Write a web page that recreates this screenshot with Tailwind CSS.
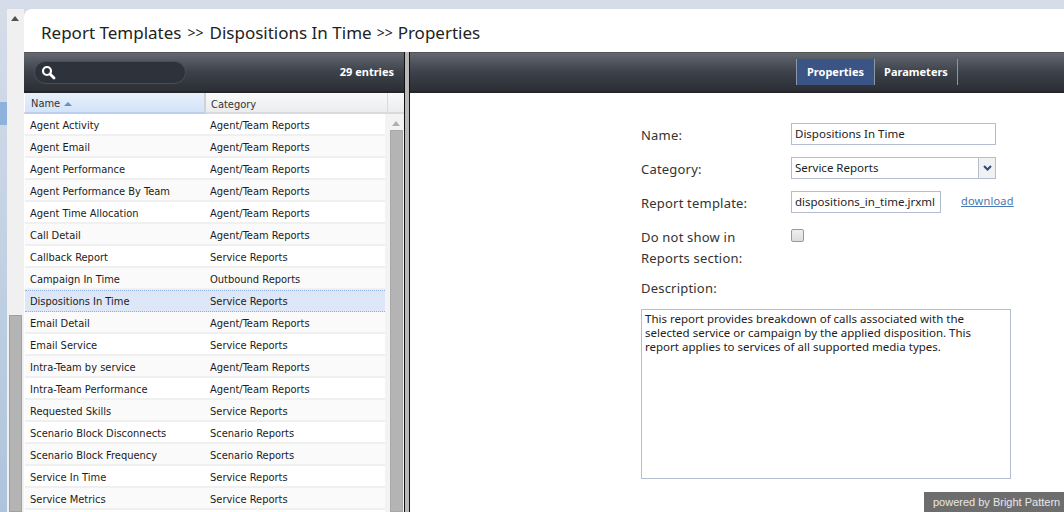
<!DOCTYPE html>
<html><head><meta charset="utf-8"><script src="https://cdn.jsdelivr.net/npm/@tailwindcss/browser@4"></script></head>
<body class="m-0">
<div class="w-[1064px] h-[512px] overflow-hidden flex flex-col bg-gradient-to-b from-[#d6dde9] to-[#aec4dc] font-['Tahoma','DejaVu_Sans_Condensed','Noto_Sans',sans-serif] text-[#222]">
  <div class="h-[9px] shrink-0"></div>
  <div class="flex flex-1 min-h-0">
    <div class="w-[7px] shrink-0 flex flex-col">
      <div class="h-[93px]"></div>
      <div class="h-[23px] bg-[#8fb2dc]"></div>
    </div>
    <div class="w-[17px] shrink-0 bg-[#f0f0f0] flex flex-col items-center relative">
      <svg class="mt-[7px] ml-[-1px]" width="8" height="5" viewBox="0 0 8 5"><path d="M0 5L4 0L8 5Z" fill="#505050"/></svg>
      <div class="mt-[294px] w-[13px] flex-1 bg-[#b4b4b4] border border-[#a0a0a0]"></div>
    </div>
    <div class="flex-1 min-w-0 bg-white rounded-tl-[8px] flex flex-col overflow-hidden">
      <div class="h-[43px] shrink-0 pl-[17px] pt-[4px] flex items-center text-[17px] text-[#222] font-['Noto_Sans',sans-serif]">Report Templates <span class="text-[14px] mx-[6px]">&gt;&gt;</span> Dispositions In Time <span class="text-[14px] mx-[5px]">&gt;&gt;</span> Properties</div>
      <div class="flex flex-1 min-h-0">
        <div class="w-[380px] shrink-0 flex flex-col">
          <div class="h-[41px] shrink-0 bg-gradient-to-b from-[#646870] via-[#3d4149] to-[#2b2e35] border-t border-[#555] border-b-2 border-b-[#23252a] flex items-center justify-between pl-[10px] pr-[10px]">
            <div class="w-[152px] h-[23px] rounded-full bg-[#2e323b] border border-[#4a4e56] flex items-center pl-[6px]">
              <svg width="15" height="15" viewBox="0 0 15 15" fill="none"><circle cx="6" cy="6" r="4" stroke="#fff" stroke-width="2.2"/><path d="M9 9L13 13" stroke="#fff" stroke-width="2.8" stroke-linecap="round"/></svg>
            </div>
            <span class="text-[11px] font-bold text-white font-['Noto_Sans',sans-serif]">29 entries</span>
          </div>
          <div class="flex-1 min-h-0 flex flex-col">
            <div class="h-[21px] shrink-0 flex text-[11px] leading-[21px] text-[#333] border-b-2 border-[#d8dadd]">
              <div class="w-[181px] ml-[1px] pl-[6px] pt-[2px] bg-gradient-to-b from-[#e8f0fb] to-[#d3e3f8] border-r-2 border-[#cfd3d8] border-b-2 border-b-[#bcd0ee] h-[21px] flex items-center gap-[4px]">Name <svg width="8" height="4" viewBox="0 0 8 4"><path d="M0 4L4 0L8 4Z" fill="#6a8fc4"/></svg></div>
              <div class="w-[182px] pl-[5px] pt-[1px] bg-gradient-to-b from-[#fafafa] to-[#ebecee] border-r border-[#d8dadd]">Category</div>
              <div class="flex-1 bg-gradient-to-b from-[#fafafa] to-[#ebecee]"></div>
            </div>
            <div class="flex flex-1 min-h-0">
              <div class="w-[360px] shrink-0 ml-[1px] flex flex-col text-[11px] text-[#1c1c1c]">
                <div class="h-[22px] shrink-0 flex items-center pt-[4px] border-b-2 border-[#f0f0f0] bg-white"><span class="w-[185px] pl-[5px]">Agent Activity</span><span>Agent/Team Reports</span></div>
                <div class="h-[22px] shrink-0 flex items-center pt-[4px] border-b-2 border-[#f0f0f0] bg-[#fafafa]"><span class="w-[185px] pl-[5px]">Agent Email</span><span>Agent/Team Reports</span></div>
                <div class="h-[22px] shrink-0 flex items-center pt-[4px] border-b-2 border-[#f0f0f0] bg-white"><span class="w-[185px] pl-[5px]">Agent Performance</span><span>Agent/Team Reports</span></div>
                <div class="h-[22px] shrink-0 flex items-center pt-[4px] border-b-2 border-[#f0f0f0] bg-[#fafafa]"><span class="w-[185px] pl-[5px]">Agent Performance By Team</span><span>Agent/Team Reports</span></div>
                <div class="h-[22px] shrink-0 flex items-center pt-[4px] border-b-2 border-[#f0f0f0] bg-white"><span class="w-[185px] pl-[5px]">Agent Time Allocation</span><span>Agent/Team Reports</span></div>
                <div class="h-[22px] shrink-0 flex items-center pt-[4px] border-b-2 border-[#f0f0f0] bg-[#fafafa]"><span class="w-[185px] pl-[5px]">Call Detail</span><span>Agent/Team Reports</span></div>
                <div class="h-[22px] shrink-0 flex items-center pt-[4px] border-b-2 border-[#f0f0f0] bg-white"><span class="w-[185px] pl-[5px]">Callback Report</span><span>Service Reports</span></div>
                <div class="h-[22px] shrink-0 flex items-center pt-[4px] border-b-2 border-[#f0f0f0] bg-[#fafafa]"><span class="w-[185px] pl-[5px]">Campaign In Time</span><span>Outbound Reports</span></div>
                <div class="h-[22px] shrink-0 flex items-center pt-[2px] border-y border-dotted border-[#8fb0e0] bg-[#dde7f7]"><span class="w-[185px] pl-[5px]">Dispositions In Time</span><span>Service Reports</span></div>
                <div class="h-[22px] shrink-0 flex items-center pt-[4px] border-b-2 border-[#f0f0f0] bg-[#fafafa]"><span class="w-[185px] pl-[5px]">Email Detail</span><span>Agent/Team Reports</span></div>
                <div class="h-[22px] shrink-0 flex items-center pt-[4px] border-b-2 border-[#f0f0f0] bg-white"><span class="w-[185px] pl-[5px]">Email Service</span><span>Service Reports</span></div>
                <div class="h-[22px] shrink-0 flex items-center pt-[4px] border-b-2 border-[#f0f0f0] bg-[#fafafa]"><span class="w-[185px] pl-[5px]">Intra-Team by service</span><span>Agent/Team Reports</span></div>
                <div class="h-[22px] shrink-0 flex items-center pt-[4px] border-b-2 border-[#f0f0f0] bg-white"><span class="w-[185px] pl-[5px]">Intra-Team Performance</span><span>Agent/Team Reports</span></div>
                <div class="h-[22px] shrink-0 flex items-center pt-[4px] border-b-2 border-[#f0f0f0] bg-[#fafafa]"><span class="w-[185px] pl-[5px]">Requested Skills</span><span>Service Reports</span></div>
                <div class="h-[22px] shrink-0 flex items-center pt-[4px] border-b-2 border-[#f0f0f0] bg-white"><span class="w-[185px] pl-[5px]">Scenario Block Disconnects</span><span>Scenario Reports</span></div>
                <div class="h-[22px] shrink-0 flex items-center pt-[4px] border-b-2 border-[#f0f0f0] bg-[#fafafa]"><span class="w-[185px] pl-[5px]">Scenario Block Frequency</span><span>Scenario Reports</span></div>
                <div class="h-[22px] shrink-0 flex items-center pt-[4px] border-b-2 border-[#f0f0f0] bg-white"><span class="w-[185px] pl-[5px]">Service In Time</span><span>Service Reports</span></div>
                <div class="h-[22px] shrink-0 flex items-center pt-[4px] border-b-2 border-[#f0f0f0] bg-[#fafafa]"><span class="w-[185px] pl-[5px]">Service Metrics</span><span>Service Reports</span></div>
              </div>
              <div class="flex-1 bg-[#f3f3f3] flex flex-col items-center pl-[3px]">
                <svg class="mt-[7px]" width="8" height="5" viewBox="0 0 8 5"><path d="M0 5L4 0L8 5Z" fill="#b0b0b0"/></svg>
                <div class="mt-[4px] w-[13px] flex-1 bg-[#b4b4b4] border border-[#a8a8a8]"></div>
              </div>
            </div>
          </div>
        </div>
        <div class="w-[6px] shrink-0 bg-[#b9b9b9] border-x border-[#111]"></div>
        <div class="flex-1 min-w-0 flex flex-col">
          <div class="h-[41px] shrink-0 bg-gradient-to-b from-[#646870] via-[#3d4149] to-[#2b2e35] border-t border-[#555] border-b-2 border-b-[#23252a] flex justify-end pr-[106px] pt-[6px] text-[11px] font-bold text-white font-['Noto_Sans',sans-serif]">
            <div class="h-[26px] w-[79px] bg-[#3a5585] border-x border-[#8d96a5] flex items-center justify-center mr-[-1px]">Properties</div>
            <div class="h-[26px] w-[84px] border-x border-[#8d96a5] flex items-center justify-center">Parameters</div>
          </div>
          <div class="flex-1 min-h-0 relative pl-[231px] pt-[30px] flex flex-col text-[13px] text-[#333] font-['Noto_Sans',sans-serif]">
            <div class="flex h-[34px]"><span class="w-[150px] leading-[24px] tracking-[0.2px]">Name:</span><div class="w-[205px] h-[22px] border border-[#b4bccf] bg-white px-[3px] text-[11.5px] leading-[20px] text-[#222]">Dispositions In Time</div></div>
            <div class="flex h-[34px]"><span class="w-[150px] leading-[24px] tracking-[0.2px]">Category:</span><div class="w-[205px] h-[22px] border border-[#b4bccf] bg-white pl-[3px] text-[11.5px] leading-[20px] text-[#222] flex justify-between">Service Reports<span class="w-[17px] bg-[#f0f1f3] border-l border-[#b4bccf] flex items-center justify-center"><svg width="9" height="6" viewBox="0 0 9 6"><path d="M1 1L4.5 4.5L8 1" fill="none" stroke="#2c4a7c" stroke-width="2"/></svg></span></div></div>
            <div class="flex h-[34px]"><span class="w-[150px] leading-[24px] tracking-[0.2px]">Report template:</span><div class="w-[150px] h-[22px] border border-[#b4bccf] bg-white px-[3px] text-[11.5px] leading-[20px] text-[#222]">dispositions_in_time.jrxml</div><a class="ml-[20px] text-[11px] leading-[20px] text-[#4a78b0] underline tracking-[0.2px]">download</a></div>
            <div class="flex h-[51px]"><span class="w-[150px] leading-[21px] tracking-[0.2px] pt-[2px]">Do not show in<br>Reports section:</span><div class="w-[13px] h-[13px] mt-[4px] border border-[#999] rounded-[2px] bg-gradient-to-b from-[#eee] to-[#ddd]"></div></div>
            <div class="h-[33px] leading-[24px] tracking-[0.2px]">Description:</div>
            <div class="w-[370px] h-[170px] border border-[#b4bccf] bg-white px-[3px] py-[2px] text-[11.5px] leading-[14px] text-[#222]">This report provides breakdown of calls associated with the selected service or campaign by the applied disposition. This report applies to services of all supported media types.</div>
            <div class="absolute right-0 bottom-0 w-[140px] h-[20px] bg-[#6d6d6d] text-[11px] leading-[20px] text-[#e8e8e8] pl-[9px] font-['Liberation_Sans',sans-serif]">powered by Bright Pattern</div>
          </div>
        </div>
      </div>
    </div>
  </div>
</div>
</body></html>
